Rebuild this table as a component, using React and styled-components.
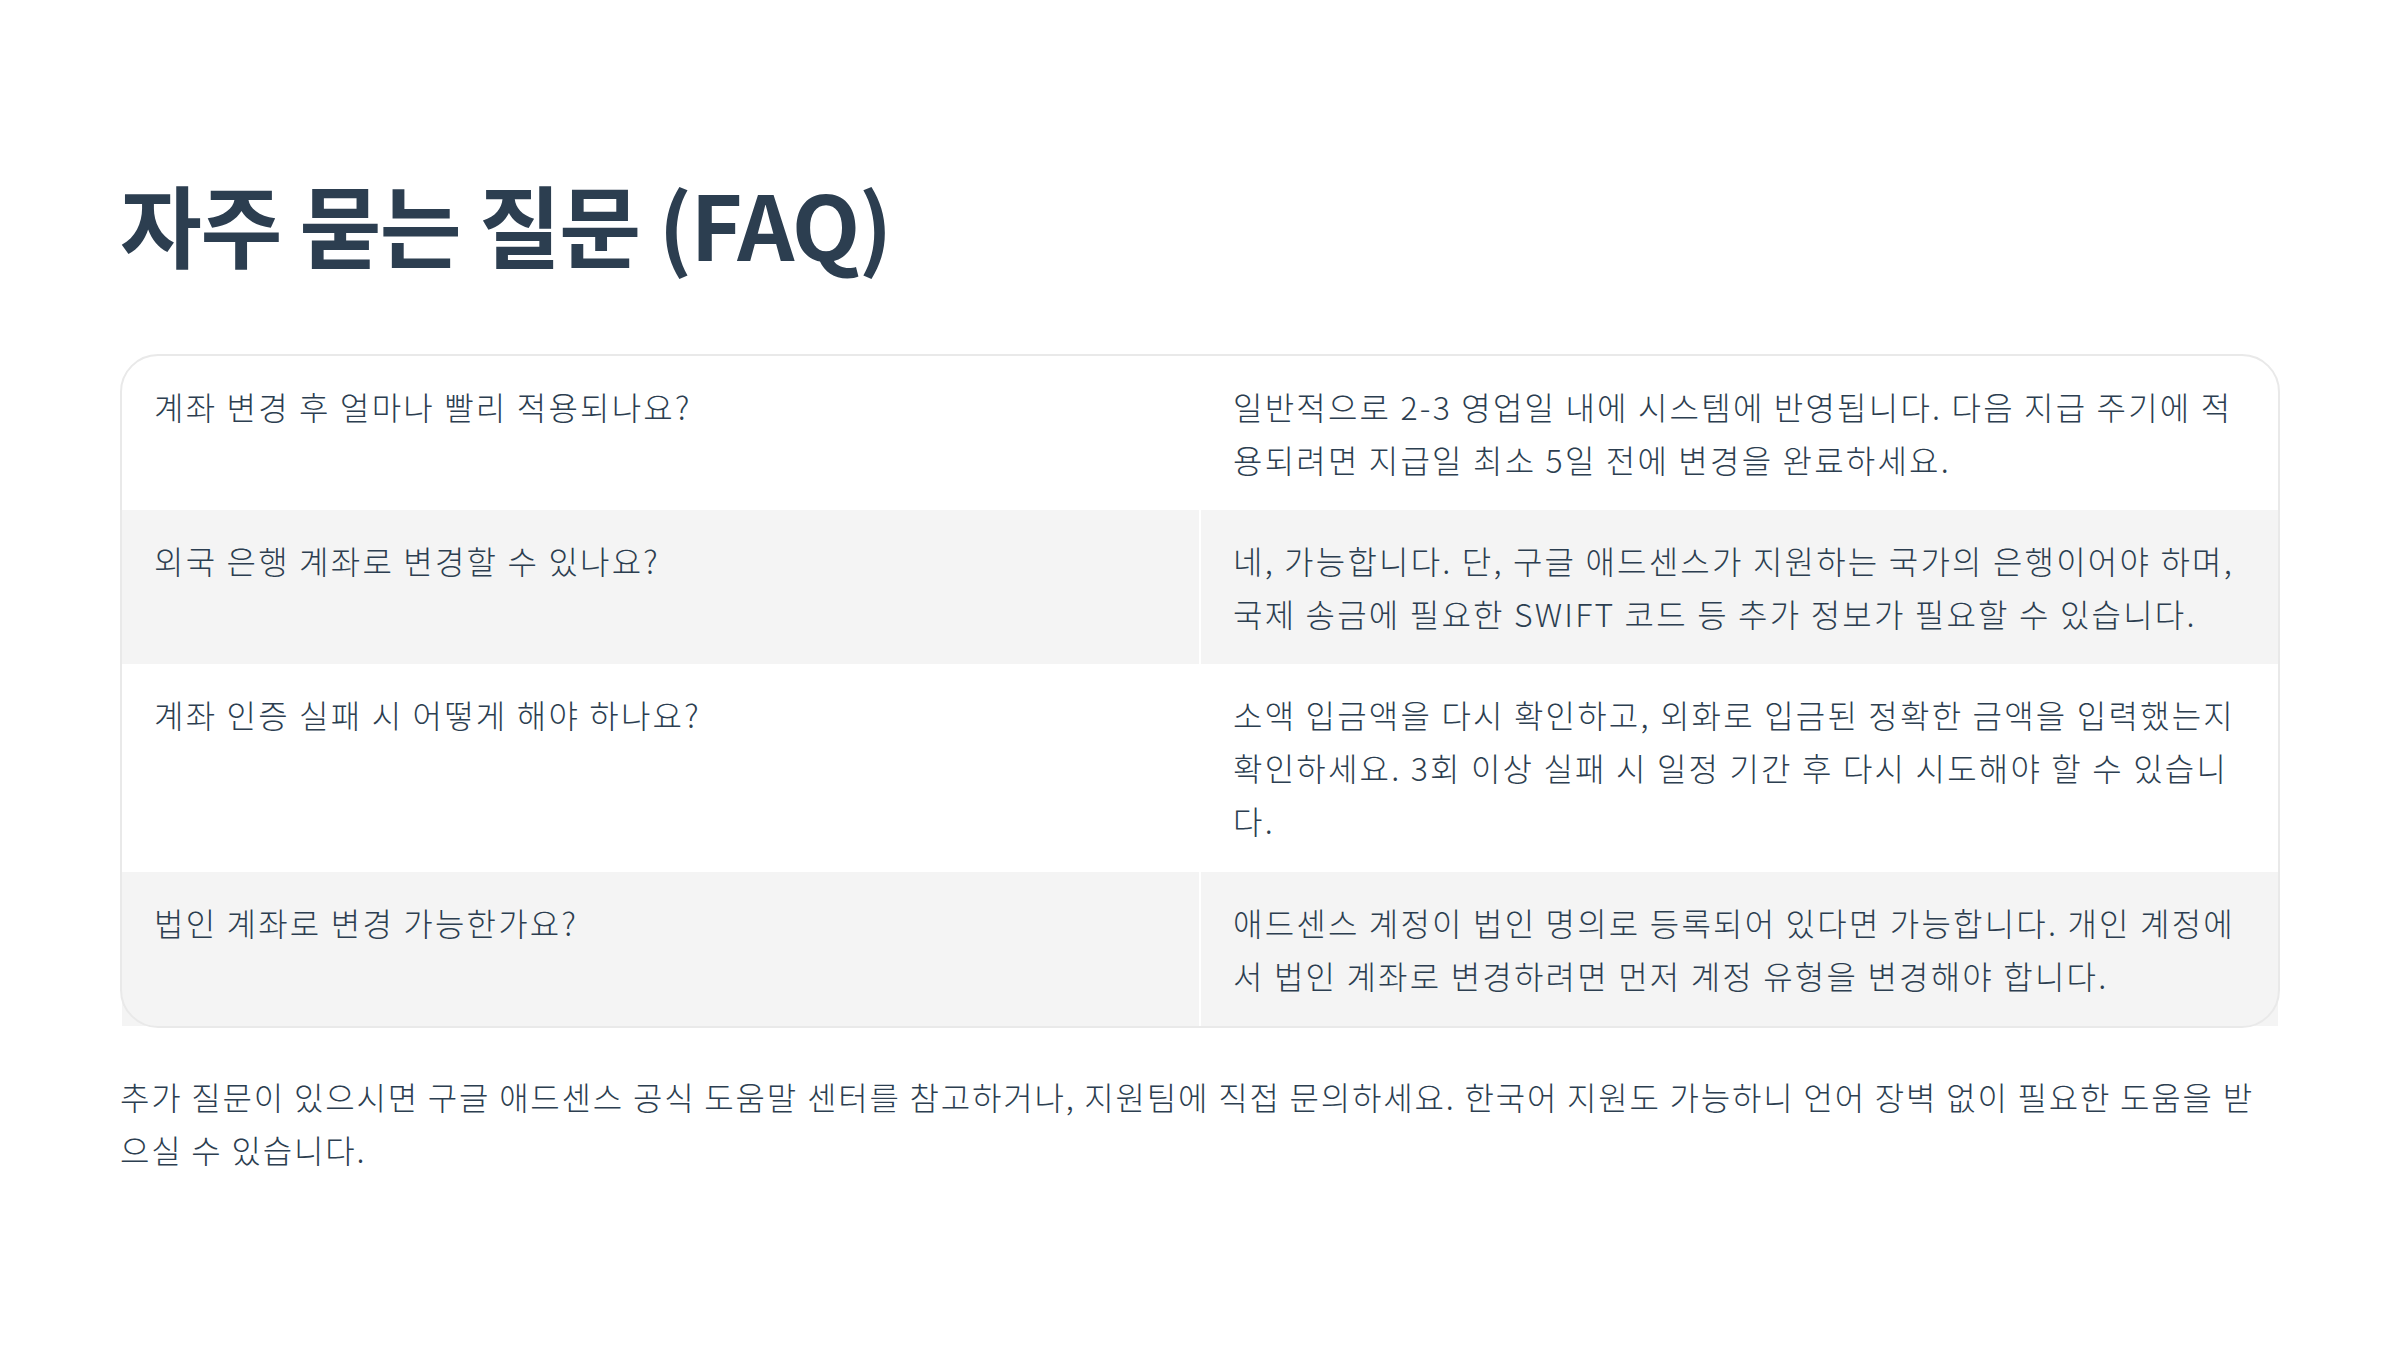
import styled, { createGlobalStyle } from 'styled-components'

const GlobalStyle = createGlobalStyle`
  html, body {
    margin: 0;
    padding: 0;
    background: #ffffff;
  }
  body {
    font-family: "Noto Sans CJK KR", "Noto Sans", sans-serif;
    color: #2c3e50;
  }
`

const faqs = [
  {
    q: '계좌 변경 후 얼마나 빨리 적용되나요?',
    a: '일반적으로 2-3 영업일 내에 시스템에 반영됩니다. 다음 지급 주기에 적용되려면 지급일 최소 5일 전에 변경을 완료하세요.',
  },
  {
    q: '외국 은행 계좌로 변경할 수 있나요?',
    a: '네, 가능합니다. 단, 구글 애드센스가 지원하는 국가의 은행이어야 하며, 국제 송금에 필요한 SWIFT 코드 등 추가 정보가 필요할 수 있습니다.',
  },
  {
    q: '계좌 인증 실패 시 어떻게 해야 하나요?',
    a: '소액 입금액을 다시 확인하고, 외화로 입금된 정확한 금액을 입력했는지 확인하세요. 3회 이상 실패 시 일정 기간 후 다시 시도해야 할 수 있습니다.',
  },
  {
    q: '법인 계좌로 변경 가능한가요?',
    a: '애드센스 계정이 법인 명의로 등록되어 있다면 가능합니다. 개인 계정에서 법인 계좌로 변경하려면 먼저 계정 유형을 변경해야 합니다.',
  },
]

const App = () => {
  return (
    <Page>
      <GlobalStyle />
      <Title>자주 묻는 질문 (FAQ)</Title>
      <Table>
        {faqs.map((item, i) => (
          <Row key={i} $striped={i % 2 === 1}>
            <Cell>{item.q}</Cell>
            <Cell>{item.a}</Cell>
          </Row>
        ))}
      </Table>
      <Note>
        추가 질문이 있으시면 구글 애드센스 공식 도움말 센터를 참고하거나, 지원팀에 직접 문의하세요. 한국어 지원도 가능하니 언어 장벽 없이 필요한 도움을 받으실 수 있습니다.
      </Note>
    </Page>
  )
}

const Page = styled.main`
  width: 2160px;
  margin: 0 auto;
  padding-top: 170px;
`

const Title = styled.h1`
  margin: 0 0 77px;
  font-size: 89px;
  line-height: 1.2;
  font-weight: 700;
  letter-spacing: -1.5px;
  color: #2c3e50;
`

const Table = styled.div`
  position: relative;
  padding: 2px;
  border-radius: 38px;

  &::after {
    content: '';
    position: absolute;
    inset: 0;
    border: 2px solid #e9e9e9;
    border-radius: 38px;
    pointer-events: none;
  }
`

const Row = styled.div`
  display: grid;
  grid-template-columns: 1fr 1fr;
  column-gap: 2px;

  > div {
    background: ${({ $striped }) => ($striped ? '#f4f4f4' : '#ffffff')};
  }
`

const Cell = styled.div`
  padding: 24px 32px;
  font-size: 32px;
  line-height: 1.66;
  font-weight: 300;
  letter-spacing: 2.2px;
  color: #2c3e50;
`

const Note = styled.p`
  margin: 42px 0 0;
  font-size: 32px;
  line-height: 1.65;
  font-weight: 300;
  letter-spacing: 1.8px;
  color: #2c3e50;
`

export default App
